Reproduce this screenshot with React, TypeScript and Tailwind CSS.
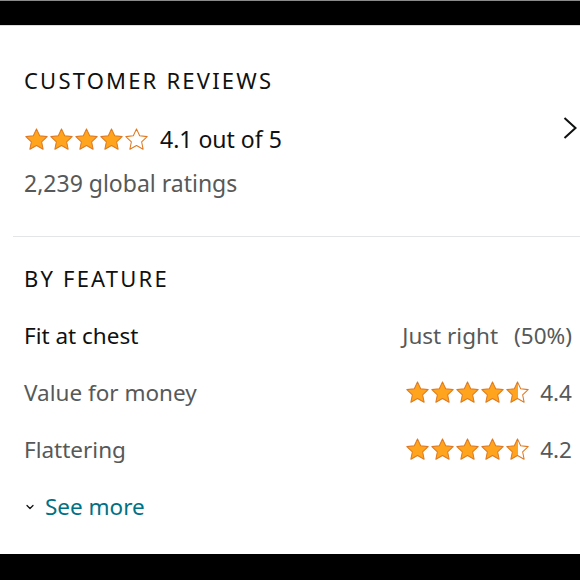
import React from "react";
import { ChevronDown } from "lucide-react";

const STAR =
  "M12 1.8l3.05 6.6 7.2.85-5.33 4.93 1.42 7.12L12 17.8l-6.34 3.5 1.42-7.12L1.75 9.25l7.2-.85z";

type Fill = "full" | "half" | "empty";

const Star: React.FC<{ fill: Fill; id: string }> = ({ fill, id }) => (
  <svg viewBox="0 0 24 24" className="h-[25px] w-[25px] shrink-0">
    {fill === "half" && (
      <defs>
        <clipPath id={id}>
          <rect x="0" y="0" width="12.5" height="24" />
        </clipPath>
      </defs>
    )}
    {fill === "full" && (
      <path d={STAR} fill="#FFA41C" stroke="#DE7921" strokeWidth="1" strokeLinejoin="round" />
    )}
    {fill === "half" && (
      <>
        <path d={STAR} fill="#fff" />
        <path d={STAR} fill="#FFA41C" clipPath={`url(#${id})`} />
        <path d={STAR} fill="none" stroke="#DE7921" strokeWidth="1" strokeLinejoin="round" />
      </>
    )}
    {fill === "empty" && (
      <path d={STAR} fill="#fff" stroke="#DE7921" strokeWidth="1" strokeLinejoin="round" />
    )}
  </svg>
);

const Stars: React.FC<{ fills: Fill[]; prefix: string }> = ({ fills, prefix }) => (
  <div className="flex items-center">
    {fills.map((f, i) => (
      <Star key={i} fill={f} id={`${prefix}-${i}`} />
    ))}
  </div>
);

const features = [
  { key: "value", label: "Value for money", value: "4.4" },
  { key: "flatter", label: "Flattering", value: "4.2" },
];

export default function App() {
  return (
    <div
      className="flex h-[580px] w-[580px] flex-col overflow-hidden bg-white"
      style={{ fontFamily: '"Noto Sans", "Open Sans", sans-serif' }}
    >
      <div className="h-[26px] shrink-0 border-t border-[#8a8a8a] border-b border-b-[#dcdcdc] bg-black" />

      <div className="flex-1">
        <section className="relative px-6 pt-[39px] pb-[38px]">
          <h2 className="text-[22px] leading-[30px] tracking-[2.2px] text-[#0f1111]">
            CUSTOMER REVIEWS
          </h2>
          <div className="mt-[29px] flex h-[30px] items-center gap-[11px]">
            <Stars fills={["full", "full", "full", "full", "empty"]} prefix="cr" />
            <span className="text-[23px] leading-[30px] text-[#0f1111]">4.1 out of 5</span>
          </div>
          <p className="mt-[14px] text-[23px] leading-[30px] text-[#565959]">2,239 global ratings</p>
          <svg
            viewBox="0 0 14 22"
            className="absolute right-[3px] top-[91px] h-[22px] w-[14px]"
            fill="none"
            stroke="#0f1111"
            strokeWidth="2"
          >
            <path d="M1.5 1l11 10-11 10" />
          </svg>
        </section>

        <div className="ml-[13px] h-px bg-[#e3e6e6]" />

        <section className="px-6 pt-[26px]">
          <h2 className="text-[22px] leading-[30px] tracking-[2.2px] text-[#0f1111]">BY FEATURE</h2>
          <div className="mt-[14px] flex h-[57px] items-center justify-between">
            <span className="text-[22.5px] text-[#0f1111]">Fit at chest</span>
            <span className="-mr-[16px] text-[22.5px] text-[#565959]">
              Just right<span className="ml-[16px]">(50%)</span>
            </span>
          </div>
          {features.map((f) => (
            <div key={f.key} className="flex h-[57px] items-center justify-between">
              <span className="text-[22.5px] text-[#565959]">{f.label}</span>
              <div className="-mr-[16px] flex items-center gap-[10px]">
                <Stars fills={["full", "full", "full", "full", "half"]} prefix={f.key} />
                <span className="text-[22.5px] text-[#565959]">{f.value}</span>
              </div>
            </div>
          ))}
          <div className="flex h-[57px] items-center gap-[9px]">
            <ChevronDown className="h-[12px] w-[12px] text-[#0f1111]" strokeWidth={2.5} />
            <span className="text-[22.5px] text-[#007185]">See more</span>
          </div>
        </section>
      </div>

      <div className="h-[26px] shrink-0 bg-black" />
    </div>
  );
}
